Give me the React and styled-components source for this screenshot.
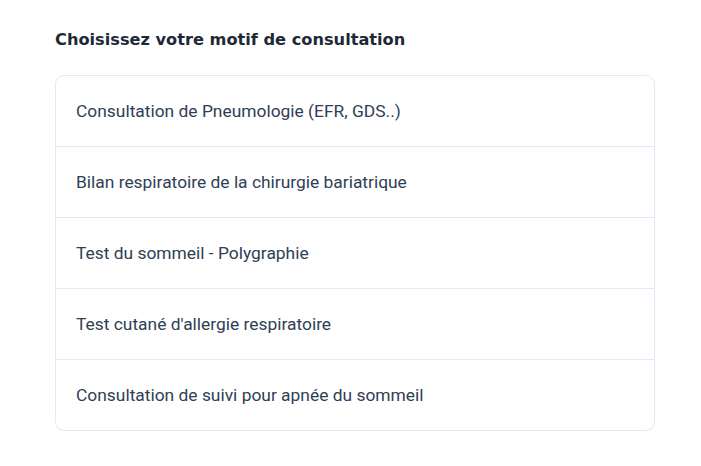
import React from 'react';
import styled, { createGlobalStyle } from 'styled-components';

const GlobalStyle = createGlobalStyle`
  body {
    margin: 0;
    background: #ffffff;
    font-family: Roboto, "Liberation Sans", sans-serif;
  }
`;

const motifs = [
  'Consultation de Pneumologie (EFR, GDS..)',
  'Bilan respiratoire de la chirurgie bariatrique',
  'Test du sommeil - Polygraphie',
  "Test cutané d'allergie respiratoire",
  'Consultation de suivi pour apnée du sommeil',
];

const Page = styled.div`
  padding: 29px 0 0 55px;
  width: 600px;
`;

const Heading = styled.h2`
  margin: 0 0 24px;
  font-family: "DejaVu Sans", sans-serif;
  font-size: 16.2px;
  font-weight: 700;
  color: #1e2936;
  line-height: 22px;
`;

const List = styled.ul`
  list-style: none;
  margin: 0;
  padding: 0;
  border: 1px solid #e2ebf5;
  border-radius: 9px;
  overflow: hidden;
`;

const Item = styled.li`
  display: flex;
  align-items: center;
  height: 70px;
  padding: 0 20px;
  font-size: 17.4px;
  color: #2f4055;
  border-top: ${(p) => (p.first ? 'none' : '1px solid #e2ebf5')};
  cursor: pointer;

  &:hover {
    background: #f7fafd;
  }
`;

const App = () => (
  <>
    <GlobalStyle />
    <Page>
      <Heading>Choisissez votre motif de consultation</Heading>
      <List>
        {motifs.map((m, i) => (
          <Item key={i} first={i === 0}>{m}</Item>
        ))}
      </List>
    </Page>
  </>
);

export default App;
